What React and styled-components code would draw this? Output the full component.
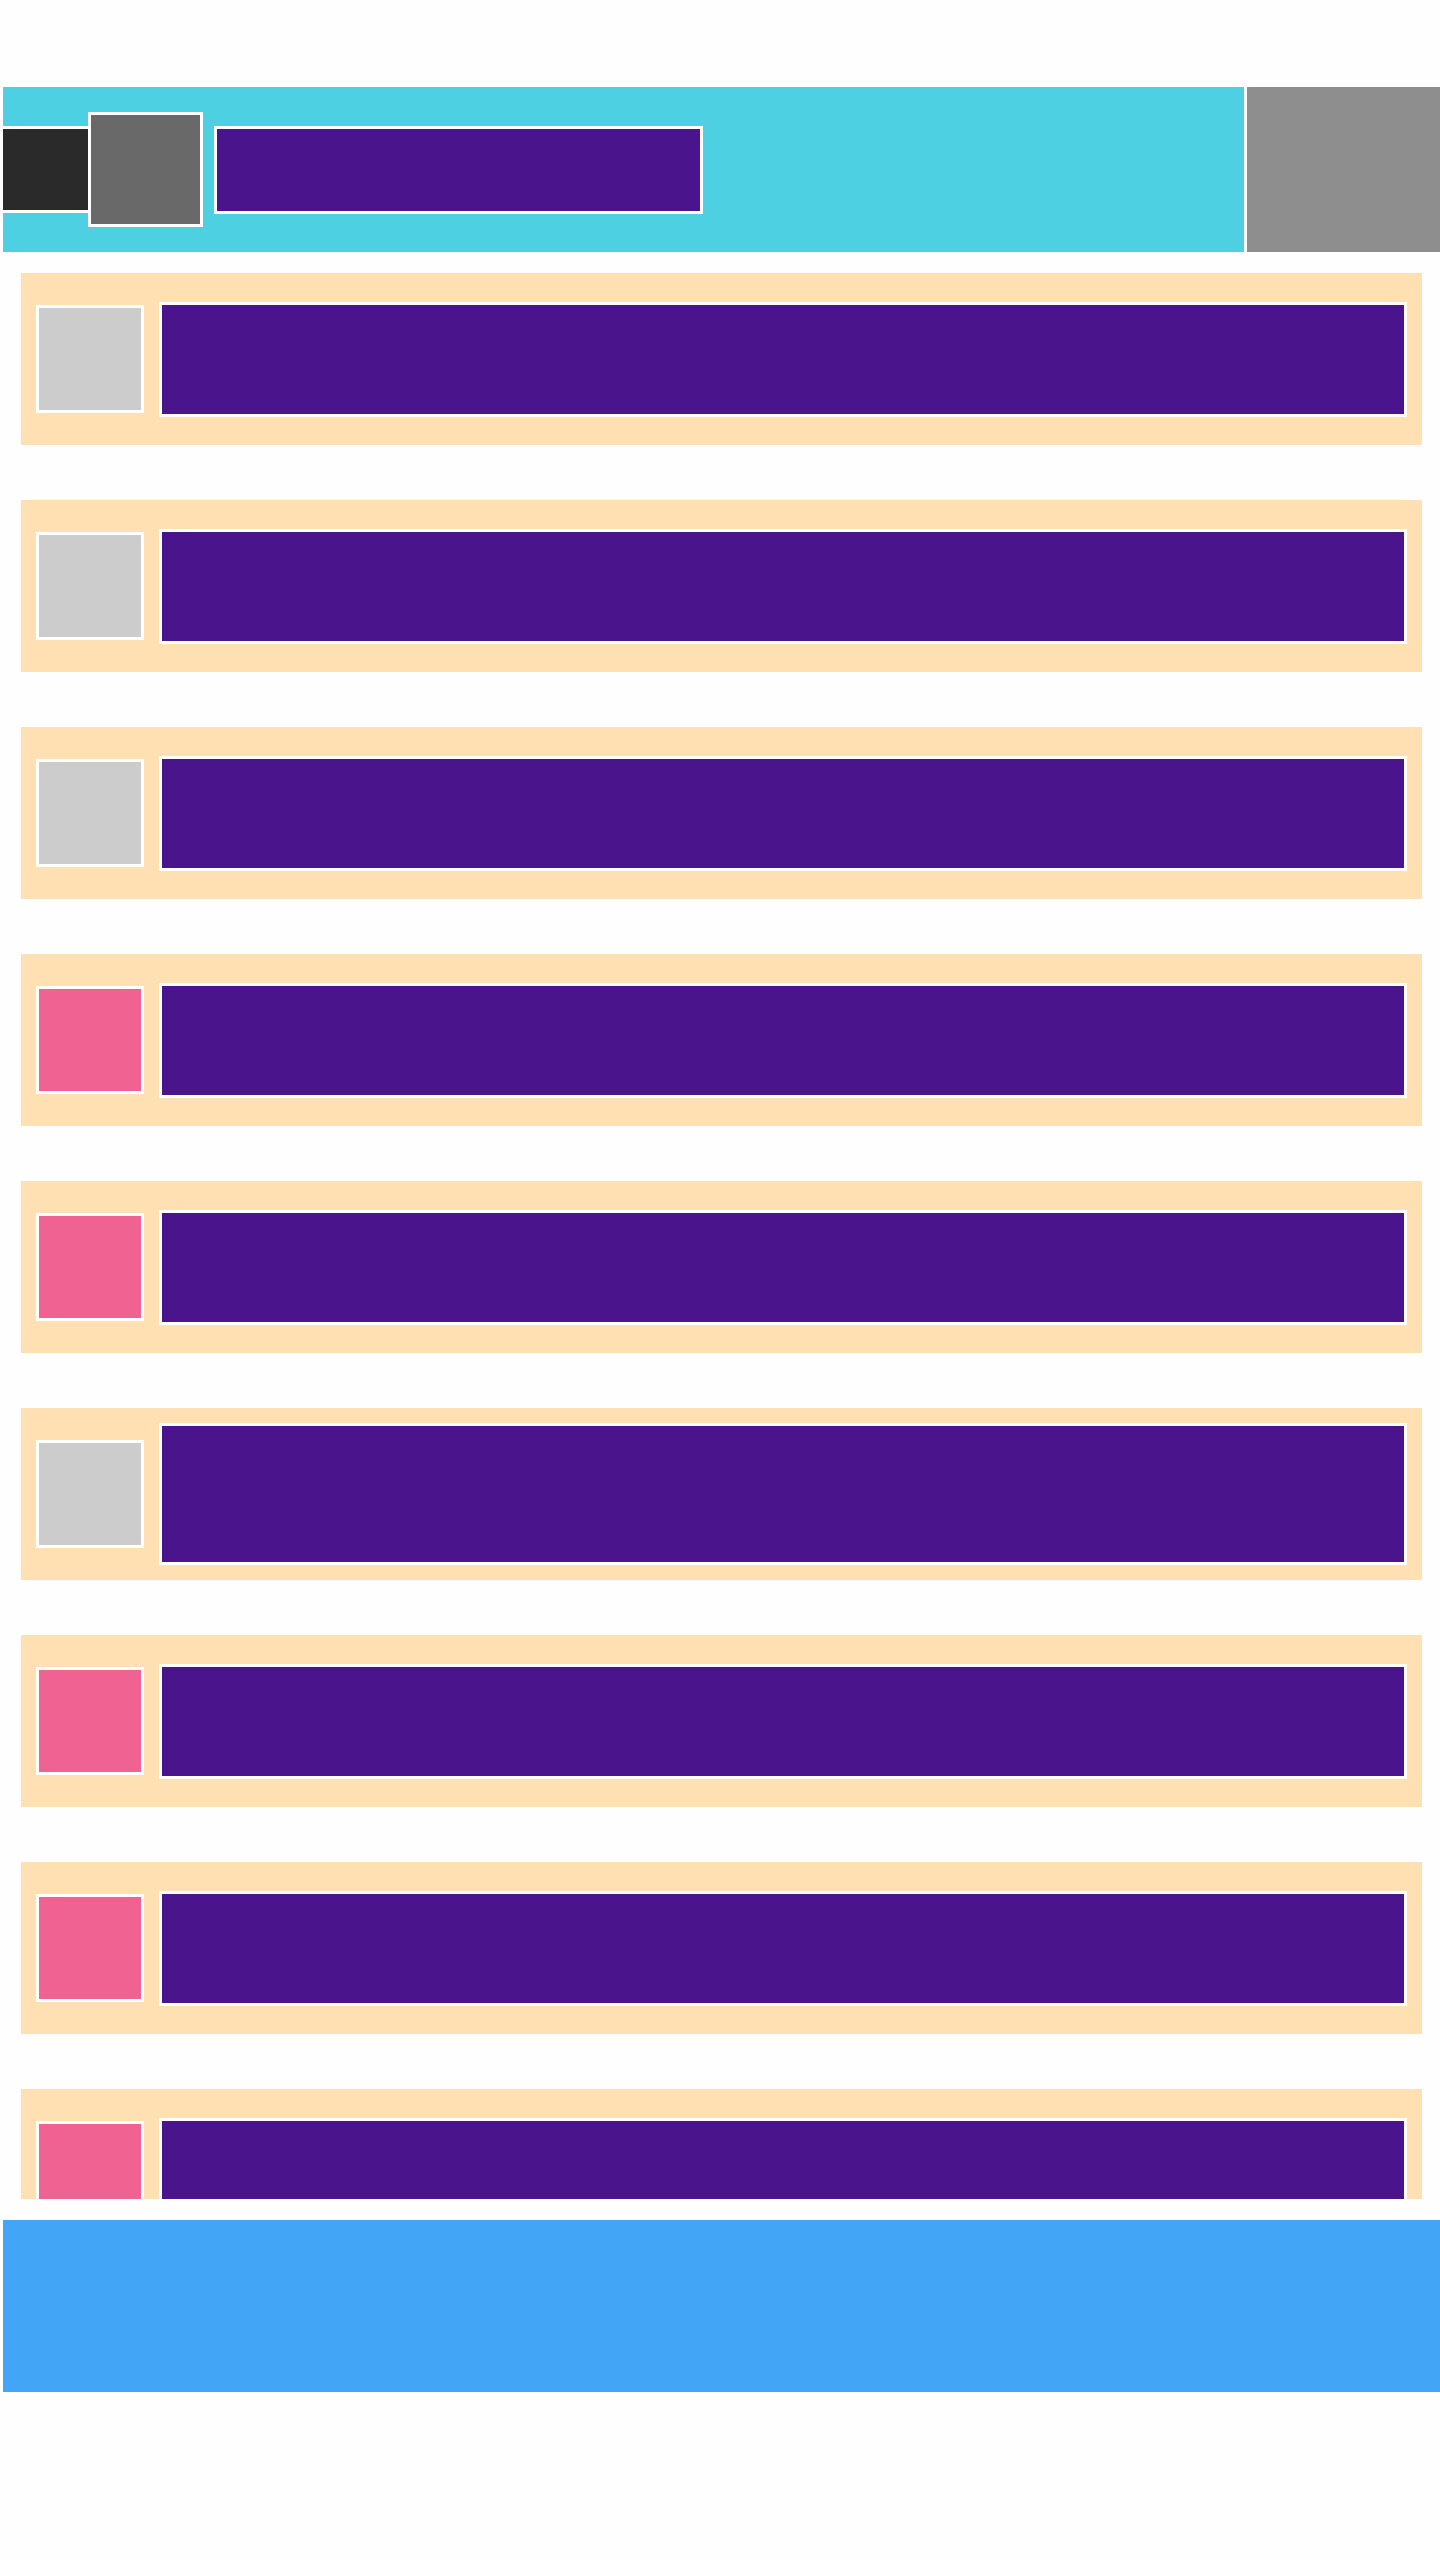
import React from "react";
import styled, { createGlobalStyle } from "styled-components";

const Global = createGlobalStyle`
  *, *::before, *::after { box-sizing: border-box; }
  html, body { margin: 0; padding: 0; background: #fefefe; font-family: "Liberation Sans", Arial, sans-serif; }
`;

const Page = styled.div`
  padding: 87px 0 0 3px;
  width: 1440px;
`;

const Header = styled.header`
  display: flex;
  gap: 3px;
  height: 165px;
`;

const HeaderMain = styled.div`
  flex: 1;
  background: #4dd0e1;
  display: flex;
  align-items: center;
`;

const MenuBlock = styled.div`
  width: 85px;
  height: 87px;
  background: #2a2a2a;
  border-top: 3px solid #fff;
  border-bottom: 3px solid #fff;
`;

const Avatar = styled.div`
  width: 115px;
  height: 115px;
  background: #696969;
  border: 3px solid #fff;
`;

const TitleBar = styled.div`
  width: 489px;
  height: 88px;
  margin-left: 11px;
  background: #4a148c;
  border: 3px solid #fff;
`;

const HeaderSide = styled.div`
  width: 193px;
  background: #8e8e8e;
`;

const List = styled.div`
  height: 1947px;
  overflow: hidden;
  padding: 21px 18px 0 18px;
  display: flex;
  flex-direction: column;
  gap: 55px;
`;

const Row = styled.div`
  flex: none;
  height: 172px;
  background: #ffe0b2;
  padding: 0 15px;
  display: flex;
  align-items: center;
  gap: 15px;
`;

const Thumb = styled.div`
  flex: none;
  width: 108px;
  height: 108px;
  border: 3px solid #fff;
  background: ${(p) => (p.$active ? "#f06292" : "#cccccc")};
`;

const Bar = styled.div`
  flex: 1;
  height: ${(p) => (p.$tall ? "142px" : "115px")};
  border: 3px solid #fff;
  background: #4a148c;
`;

const Footer = styled.footer`
  margin-top: 21px;
  height: 172px;
  background: #42a5f5;
`;

const rows = [
  { active: false },
  { active: false },
  { active: false },
  { active: true },
  { active: true },
  { active: false, tall: true },
  { active: true },
  { active: true },
  { active: true },
];

export default function App() {
  return (
    <>
      <Global />
      <Page>
        <Header>
          <HeaderMain>
            <MenuBlock />
            <Avatar />
            <TitleBar />
          </HeaderMain>
          <HeaderSide />
        </Header>
        <List>
          {rows.map((r, i) => (
            <Row key={i}>
              <Thumb $active={r.active} />
              <Bar $tall={r.tall} />
            </Row>
          ))}
        </List>
        <Footer />
      </Page>
    </>
  );
}
